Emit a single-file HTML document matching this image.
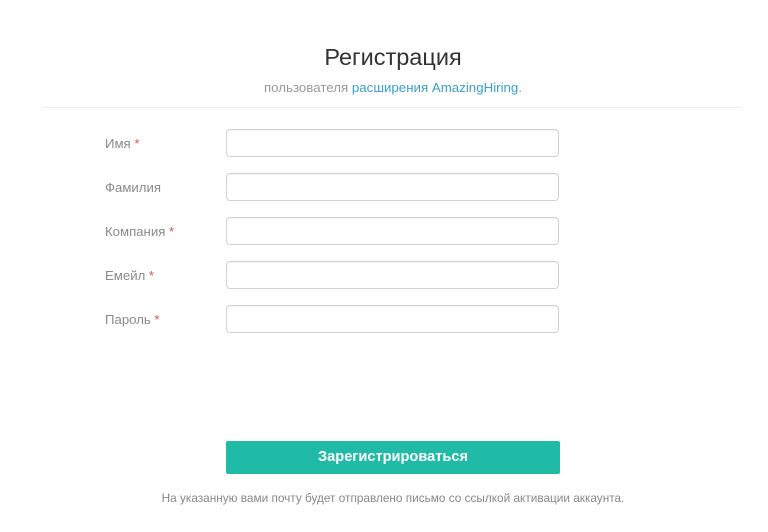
<!DOCTYPE html>
<html><head><meta charset="utf-8"><style>
body{margin:0;width:768px;height:532px;background:#fff;font-family:"Liberation Sans",sans-serif;position:relative;overflow:hidden}
.t{position:absolute;left:0;width:786px;text-align:center}
h1{position:absolute;left:0;width:786px;text-align:center;top:44px;margin:0;font-weight:normal;font-size:23.5px;color:#333}
.sub{top:80px;font-size:13.3px;color:#999}
.sub span{color:#3a9fcf}
.hr{position:absolute;left:43px;width:698px;top:107px;height:1px;background:#ececec}
.lab{position:absolute;left:105px;font-size:13.2px;color:#8a8a8a}
.lab b{color:#d9534f;font-weight:normal}
.in{position:absolute;left:226px;width:331px;height:26px;border:1px solid #d2d2d2;border-radius:4px;box-shadow:inset 0 1px 1px rgba(0,0,0,.05)}
.btn{position:absolute;left:226px;top:441px;width:334px;height:33px;background:#1fbba6;border-radius:2px;color:#fff;font-weight:bold;font-size:14.6px;text-align:center;line-height:33px}
.foot{top:491px;font-size:11.8px;color:#888}
</style></head><body>
<h1>Регистрация</h1>
<div class="t sub">пользователя <span>расширения AmazingHiring</span>.</div>
<div class="hr"></div>
<div class="lab" style="top:136px">Имя <b>*</b></div><div class="in" style="top:129px"></div>
<div class="lab" style="top:180px">Фамилия</div><div class="in" style="top:173px"></div>
<div class="lab" style="top:224px">Компания <b>*</b></div><div class="in" style="top:217px"></div>
<div class="lab" style="top:268px">Емейл <b>*</b></div><div class="in" style="top:261px"></div>
<div class="lab" style="top:312px">Пароль <b>*</b></div><div class="in" style="top:305px"></div>
<div class="btn">Зарегистрироваться</div>
<div class="t foot">На указанную вами почту будет отправлено письмо со ссылкой активации аккаунта.</div>
</body></html>
